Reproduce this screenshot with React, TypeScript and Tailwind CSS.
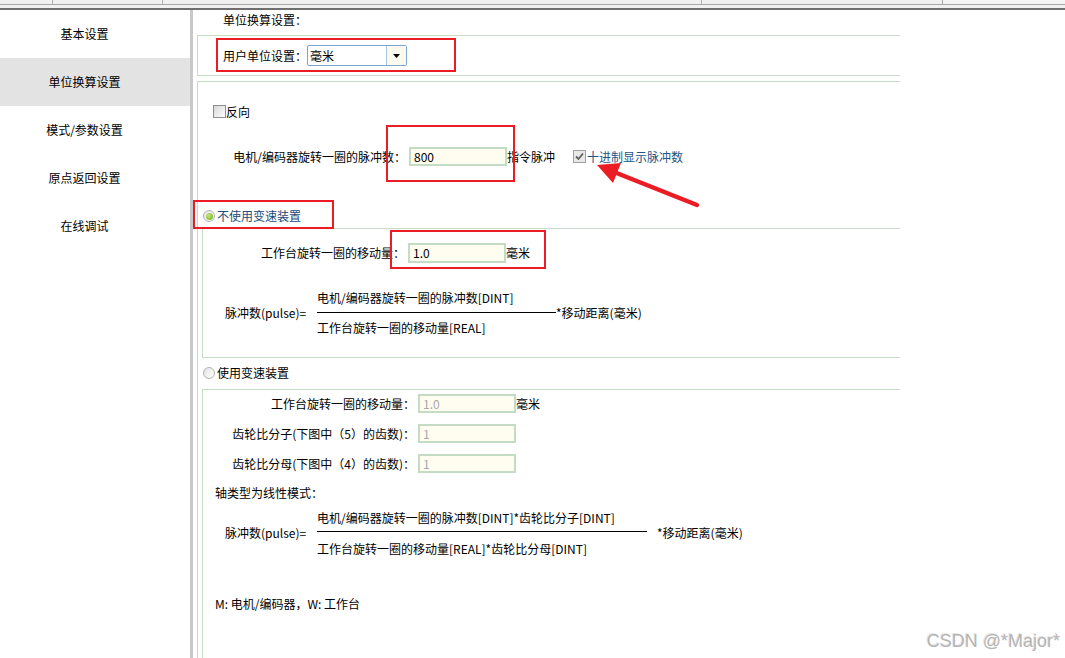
import React from 'react'

const navItems = ['基本设置', '单位换算设置', '模式/参数设置', '原点返回设置', '在线调试']

function Field({ value, disabled, tall }: { value: string; disabled?: boolean; tall?: boolean }) {
  return (
    <div
      className={`flex w-[98px] items-center border-2 border-[#c3dcc3] bg-[#fffcf0] pl-[3px] text-[12px] leading-[12px] ${
        tall ? 'h-[20px]' : 'h-[19px]'
      } ${disabled ? 'text-[#a8a8a8]' : 'text-black'}`}
    >
      {value}
    </div>
  )
}

function CheckBox({ checked }: { checked?: boolean }) {
  return (
    <div
      className={`flex h-[13px] w-[13px] shrink-0 items-center justify-center border ${
        checked ? 'border-[#a0a0a0] bg-[#e8e8e8]' : 'border-[#8e8f8f] bg-gradient-to-br from-[#d8d8d8] to-white'
      }`}
    >
      {checked && (
        <svg width="9" height="9" viewBox="0 0 9 9">
          <path d="M1 4.5 L3.5 7 L8 1.5" fill="none" stroke="#5e5e5e" strokeWidth="1.8" />
        </svg>
      )}
    </div>
  )
}

function Radio({ checked }: { checked?: boolean }) {
  return (
    <div className="flex h-[12px] w-[12px] shrink-0 items-center justify-center rounded-full border border-[#b4b4b4] bg-gradient-to-br from-[#e4e4e4] to-white">
      {checked && <div className="h-[7px] w-[7px] rounded-full bg-[radial-gradient(circle_at_35%_35%,#c4e37a,#6fae1e)]" />}
    </div>
  )
}

function Formula({
  num,
  den,
  lineW,
  after,
  afterGap,
  topGap,
  bottomGap,
}: {
  num: string
  den: string
  lineW: string
  after: string
  afterGap: string
  topGap: string
  bottomGap: string
}) {
  return (
    <div className="flex items-center pl-[22px]">
      <span className="w-[92px]">脉冲数(pulse)=</span>
      <div className="flex flex-col">
        <span className="h-[15px] leading-[15px]">{num}</span>
        <div className={topGap} />
        <div className={`h-px bg-black ${lineW}`} />
        <div className={bottomGap} />
        <span className="h-[15px] leading-[15px]">{den}</span>
      </div>
      <span className={afterGap}>{after}</span>
    </div>
  )
}

export default function App() {
  return (
    <div className="relative flex h-[658px] w-[1065px] flex-col overflow-hidden bg-white font-['Noto_Sans_CJK_SC','Noto_Sans',sans-serif] text-[12px] text-black">
      {/* top strip */}
      <div className="flex h-[5px] border-b border-[#a9a9a9] bg-[#f0f0f0]">
        <div className="w-[53px] border-r border-[#b0b0b0]" />
        <div className="w-[110px] border-r border-[#b0b0b0]" />
        <div className="w-[539px] border-r border-[#b0b0b0]" />
        <div className="w-[241px] border-r border-[#a9a9a9]" />
        <div className="flex-1 bg-[#f4f4f4]" />
      </div>
      <div className="h-[3px] bg-[#f0f0f0]" />
      <div className="h-[2px] bg-[#6f6f6f]" />

      <div className="flex flex-1">
        {/* sidebar */}
        <aside className="w-[190px] shrink-0">
          {navItems.map((item, i) => (
            <div key={item} className={`flex h-[48px] items-center ${i === 1 ? 'bg-[#e3e3e3]' : ''}`}>
              <span className="w-[169px] text-center">{item}</span>
            </div>
          ))}
        </aside>
        <div className="w-[3px] shrink-0 bg-[#c8c8c8]" />

        {/* content */}
        <main className="flex flex-1 flex-col">
          <div className="h-[25px] pl-[30px] pt-[3px] leading-[14px]">单位换算设置：</div>

          <div className="ml-[4px] flex h-[41px] w-[703px] items-center border-y border-l border-[#c6dcc6] pl-[25px]">
            <span>用户单位设置：</span>
            <div className="flex h-[21px] w-[100px] items-stretch rounded-[2px] border border-[#7ba6cf]">
              <span className="flex-1 pl-[2px] leading-[19px]">毫米</span>
              <div className="flex w-[20px] items-center justify-center border-l border-[#a9c3dc] bg-[#fcf9ef]">
                <svg width="7" height="4" viewBox="0 0 7 4">
                  <path d="M0 0 H7 L3.5 4 Z" fill="#000" />
                </svg>
              </div>
            </div>
          </div>

          <div className="ml-[4px] mt-[5px] flex w-[703px] flex-1 flex-col border-l border-t border-[#c6dcc6]">
            <div className="mt-[23px] flex items-center pl-[15px]">
              <CheckBox />
              <span className="leading-[13px]">反向</span>
            </div>

            <div className="mt-[29px] flex items-center">
              <span className="w-[208px] text-right">电机/编码器旋转一圈的脉冲数：</span>
              <div className="ml-[3px]">
                <Field value="800" />
              </div>
              <span>指令脉冲</span>
              <div className="ml-[18px] flex items-center">
                <CheckBox checked />
                <span className="ml-px text-[#245585]">十进制显示脉冲数</span>
              </div>
            </div>

            <div className="mt-[44px] flex h-[12px] items-center pl-[5px]">
              <Radio checked />
              <span className="ml-[2px] text-[#1f4a78]">不使用变速装置</span>
            </div>

            <div className="ml-[4px] mt-[6px] flex h-[130px] flex-col border-y border-l border-[#c6dcc6]">
              <div className="mt-[14px] flex items-center">
                <span className="w-[202px] text-right">工作台旋转一圈的移动量：</span>
                <div className="ml-[3px]">
                  <Field value="1.0" tall />
                </div>
                <span>毫米</span>
              </div>
              <div className="mt-[27px]">
                <Formula
                  num="电机/编码器旋转一圈的脉冲数[DINT]"
                  den="工作台旋转一圈的移动量[REAL]"
                  lineW="w-[239px]"
                  after="*移动距离(毫米)"
                  afterGap="ml-0"
                  topGap="h-[7px]"
                  bottomGap="h-[7px]"
                />
              </div>
            </div>

            <div className="mt-[9px] flex h-[12px] items-center pl-[5px]">
              <Radio />
              <span className="ml-[2px]">使用变速装置</span>
            </div>

            <div className="ml-[4px] mt-[10px] flex flex-1 flex-col border-l border-t border-[#c6dcc6] pt-[4px]">
              <div className="flex items-center">
                <span className="w-[212px] text-right">工作台旋转一圈的移动量：</span>
                <div className="ml-[3px]">
                  <Field value="1.0" disabled />
                </div>
                <span>毫米</span>
              </div>
              <div className="mt-[11px] flex items-center">
                <span className="w-[212px] text-right">齿轮比分子(下图中（5）的齿数)：</span>
                <div className="ml-[3px]">
                  <Field value="1" disabled />
                </div>
              </div>
              <div className="mt-[11px] flex items-center">
                <span className="w-[212px] text-right">齿轮比分母(下图中（4）的齿数)：</span>
                <div className="ml-[3px]">
                  <Field value="1" disabled />
                </div>
              </div>

              <div className="mt-[12px] h-[15px] pl-[12px] leading-[15px]">轴类型为线性模式：</div>

              <div className="mt-[10px]">
                <Formula
                  num="电机/编码器旋转一圈的脉冲数[DINT]*齿轮比分子[DINT]"
                  den="工作台旋转一圈的移动量[REAL]*齿轮比分母[DINT]"
                  lineW="w-[330px]"
                  after="*移动距离(毫米)"
                  afterGap="ml-[10px]"
                  topGap="h-[6px]"
                  bottomGap="h-[9px]"
                />
              </div>

              <div className="mt-[40px] h-[15px] pl-[12px] leading-[15px]">M: 电机/编码器，W: 工作台</div>
            </div>
          </div>
        </main>
      </div>

      {/* red annotation boxes */}
      <div className="absolute left-[216px] top-[38px] h-[34px] w-[240px] border-2 border-[#ea1d25]" />
      <div className="absolute left-[386px] top-[125px] h-[57px] w-[129px] border-2 border-[#ea1d25]" />
      <div className="absolute left-[193px] top-[200px] h-[29px] w-[141px] border-2 border-[#ea1d25]" />
      <div className="absolute left-[390px] top-[230px] h-[39px] w-[156px] border-2 border-[#ea1d25]" />

      {/* red arrow */}
      <svg className="pointer-events-none absolute left-0 top-0" width="1065" height="658" viewBox="0 0 1065 658">
        <line x1="697" y1="205" x2="614" y2="172" stroke="#ea1d25" strokeWidth="4.5" strokeLinecap="round" />
        <polygon points="597,165 621,163 613,183" fill="#ea1d25" />
      </svg>

      {/* watermark */}
      <div className="absolute bottom-[7px] right-[5px] font-['Liberation_Sans',Arial,sans-serif] text-[18px] leading-[20px] text-[#b4b4b4] [text-shadow:1px_1px_0_#ffffff,-1px_-1px_0_#e6e6e6]">
        CSDN @*Major*
      </div>
    </div>
  )
}
